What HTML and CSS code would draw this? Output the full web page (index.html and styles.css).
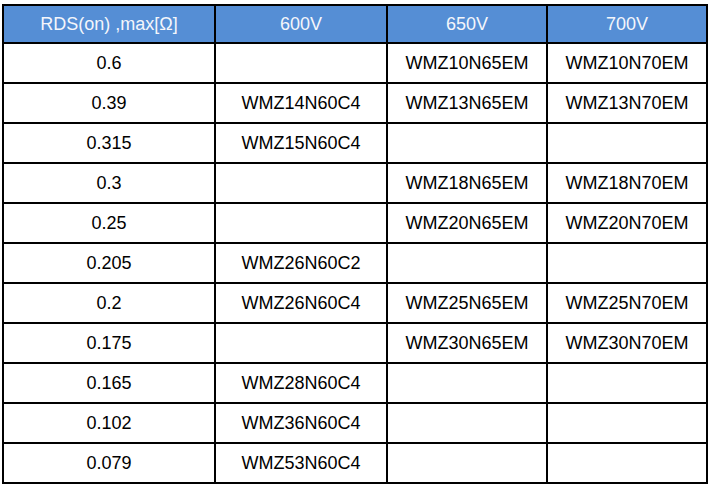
FILE: index.html
```html
<!DOCTYPE html>
<html>
<head>
<meta charset="utf-8">
<link rel="stylesheet" href="styles.css">
</head>
<body>
<div class="grid">
  <div class="cell head">RDS(on) ,max[Ω]</div>
  <div class="cell head">600V</div>
  <div class="cell head">650V</div>
  <div class="cell head">700V</div>

  <div class="cell">0.6</div><div class="cell"></div><div class="cell">WMZ10N65EM</div><div class="cell">WMZ10N70EM</div>
  <div class="cell">0.39</div><div class="cell">WMZ14N60C4</div><div class="cell">WMZ13N65EM</div><div class="cell">WMZ13N70EM</div>
  <div class="cell">0.315</div><div class="cell">WMZ15N60C4</div><div class="cell"></div><div class="cell"></div>
  <div class="cell">0.3</div><div class="cell"></div><div class="cell">WMZ18N65EM</div><div class="cell">WMZ18N70EM</div>
  <div class="cell">0.25</div><div class="cell"></div><div class="cell">WMZ20N65EM</div><div class="cell">WMZ20N70EM</div>
  <div class="cell">0.205</div><div class="cell">WMZ26N60C2</div><div class="cell"></div><div class="cell"></div>
  <div class="cell">0.2</div><div class="cell">WMZ26N60C4</div><div class="cell">WMZ25N65EM</div><div class="cell">WMZ25N70EM</div>
  <div class="cell">0.175</div><div class="cell"></div><div class="cell">WMZ30N65EM</div><div class="cell">WMZ30N70EM</div>
  <div class="cell">0.165</div><div class="cell">WMZ28N60C4</div><div class="cell"></div><div class="cell"></div>
  <div class="cell">0.102</div><div class="cell">WMZ36N60C4</div><div class="cell"></div><div class="cell"></div>
  <div class="cell">0.079</div><div class="cell">WMZ53N60C4</div><div class="cell"></div><div class="cell"></div>
</div>
</body>
</html>
```
FILE: styles.css
```css
html, body {
  margin: 0;
  padding: 0;
  background: #ffffff;
}
body {
  padding: 4px 0 0 2px;
  font-family: "Liberation Sans", Arial, sans-serif;
}
.grid {
  display: grid;
  width: 706px;
  box-sizing: border-box;
  grid-template-columns: 210px 170px 158px 158px;
  grid-template-rows: 36px repeat(11, 38px);
  gap: 2px;
  padding: 2px;
  background: #000000;
}
.cell {
  background: #ffffff;
  color: #000000;
  font-size: 18px;
  display: flex;
  align-items: center;
  justify-content: center;
}
.head {
  background: #558ed5;
  color: #f4f6fb;
}
```
